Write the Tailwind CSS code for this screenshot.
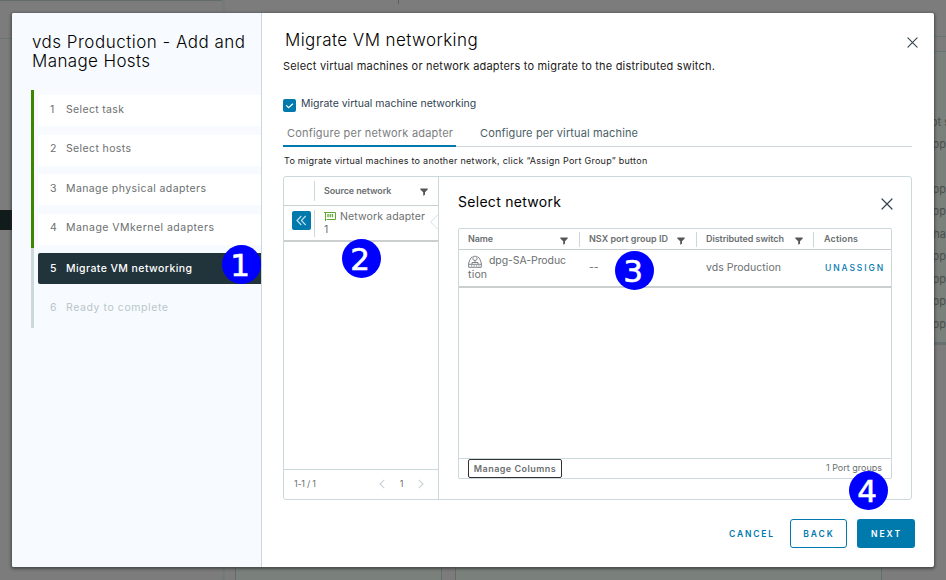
<!DOCTYPE html>
<html lang="en">
<head>
<meta charset="utf-8">
<title>vds Production - Add and Manage Hosts</title>
<script src="https://cdn.jsdelivr.net/npm/@tailwindcss/browser@4"></script>
</head>
<body class="relative w-[946px] h-[580px] overflow-hidden bg-[#7c7c7c] font-['Inter','Liberation_Sans',sans-serif] text-[11px] text-[#6b6f71]">
<svg width="0" height="0" class="absolute">
  <defs>
    <symbol id="filter" viewBox="0 0 8 8"><path d="M.3.5h7.4v1L5 4.2V6.8L3.2 7.7V4.2L.3 1.500z" fill="#565656"/></symbol>
    <symbol id="close" viewBox="0 0 12 12"><path d="M1 1l10 10M11 1L1 11" stroke="#314351" stroke-width="1.2" stroke-linecap="round"/></symbol>
  </defs>
</svg>

<!-- dimmed page behind the dialog -->
<div class="absolute inset-0 text-[11px] text-[#4c4f4e]">
  <div class="absolute left-0 top-0 w-[222px] h-px bg-[#646b6b]"></div>
  <div class="absolute left-[222px] top-0 w-[3px] h-full bg-[#747a79]"></div>
  <div class="absolute left-0 top-[38px] w-[12px] h-px bg-[#697475]"></div>
  <div class="absolute left-[398px] top-0 w-px h-[4px] bg-[#5c6060]"></div>
  <div class="absolute left-0 top-[210px] w-[12px] h-[20px] bg-[#111b1b]"></div>
  <div class="absolute left-[930px] top-[36px] w-[16px] h-[309px] border-t border-[#697475]"></div>
  <div class="absolute left-[930px] top-[51px] w-[16px] h-[294px] bg-[#7a807b] border-t border-b-3 border-t-[#697475] border-b-[#66706f]"></div>
  <div class="absolute left-[235px] top-[560px] w-[207px] h-[20px] bg-[#7a807b] border-x border-[#626c6b]"></div>
  <div class="absolute left-[455px] top-[560px] w-[427px] h-[20px] bg-[#7a807b] border-x border-[#626c6b]"></div>
  <div class="absolute left-[931px] top-[122px] leading-[14px] whitespace-nowrap -translate-y-1/2">ot s</div>
  <div class="absolute right-0 top-[144px] leading-[14px] -translate-y-1/2">upp</div>
  <div class="absolute right-0 top-[189px] leading-[14px] -translate-y-1/2">upp</div>
  <div class="absolute right-0 top-[211px] leading-[14px] -translate-y-1/2">upp</div>
  <div class="absolute right-0 top-[234px] leading-[14px] -translate-y-1/2">nha</div>
  <div class="absolute right-0 top-[256px] leading-[14px] -translate-y-1/2">upp</div>
  <div class="absolute right-0 top-[279px] leading-[14px] -translate-y-1/2">upp</div>
  <div class="absolute right-0 top-[301px] leading-[14px] -translate-y-1/2">upp</div>
  <div class="absolute right-0 top-[324px] leading-[14px] -translate-y-1/2">upp</div>
</div>

<!-- dialog -->
<div class="absolute left-[12px] top-[13px] w-[922px] h-[554px] flex bg-white rounded-[2px] shadow-[0_1px_3px_1px_rgba(40,40,40,0.6)]">
  <aside class="w-[250px] shrink-0 h-full bg-[#f7fbff] border-r border-[#ccd7dc] rounded-l-[2px] pl-[19px] pt-[20px]">
    <h1 class="h-[57px] pl-px text-[17px] leading-[19px] font-light text-black whitespace-nowrap"><span class="tracking-[0.49px]">vds Production - Add and</span><br><span class="tracking-[0.37px]">Manage Hosts</span></h1>
    <nav class="flex">
      <div class="w-[3px] h-[238px] bg-[#ccd9da]"><div class="h-[158px] bg-[#3e8500]"></div></div>
      <ol class="ml-[4px] pt-[5px] flex-1 flex flex-col gap-[8.6px] text-[10.5px]">
        <li class="h-[31px] flex items-center bg-white rounded-l-[2px] pl-[12px] pb-[2px]"><span class="w-[16px]">1</span><span class="tracking-[0.34px]">Select task</span></li>
        <li class="h-[31px] flex items-center bg-white rounded-l-[2px] pl-[12px] pb-[2px]"><span class="w-[16px]">2</span><span class="tracking-[0.38px]">Select hosts</span></li>
        <li class="h-[31px] flex items-center bg-white rounded-l-[2px] pl-[12px] pb-[2px]"><span class="w-[16px]">3</span><span class="tracking-[0.41px]">Manage physical adapters</span></li>
        <li class="h-[31px] flex items-center bg-white rounded-l-[2px] pl-[12px] pb-[2px]"><span class="w-[16px]">4</span><span class="tracking-[0.48px]">Manage VMkernel adapters</span></li>
        <li class="h-[31px] flex items-center bg-[#21333b] rounded-l-[2px] pl-[12px] pb-px font-medium text-white"><span class="w-[16px]">5</span><span class="tracking-[0.42px]">Migrate VM networking</span></li>
        <li class="h-[31px] flex items-center pl-[12px] pb-[2px] text-[#b7c5c9]"><span class="w-[16px]">6</span><span class="tracking-[0.58px]">Ready to complete</span></li>
      </ol>
    </nav>
  </aside>

  <main class="flex-1 flex flex-col pl-[21px] pr-[22px] pt-[15px]">
    <header class="flex justify-between h-[26px]">
      <h2 class="pl-[2px] text-[17px] leading-[24px] font-light tracking-[0.41px] text-black">Migrate VM networking</h2>
      <svg class="size-[11px] mt-[9px] -mr-[6px]"><use href="#close"/></svg>
    </header>
    <p class="h-[45px] pt-[4px] leading-[16px] tracking-[0.2px] text-[#1a1a1a]">Select virtual machines or network adapters to migrate to the distributed switch.</p>
    <label class="flex h-[24px] items-start text-[#314351]">
      <svg class="size-[13px]" viewBox="0 0 13 13"><rect width="13" height="13" rx="2" fill="#0079ad"/><path d="M3.200 6.400l2.400 2.300 4.300-4" fill="none" stroke="#fff" stroke-width="1.2"/></svg>
      <span class="ml-[5px] -mt-[3px] text-[10.5px] leading-[16px]">Migrate virtual machine networking</span>
    </label>
    <div class="h-[24px] flex border-b border-[#ccd7dc] leading-[20px]">
      <div class="w-[173px] h-[24px] pl-[4px] border-b-2 border-[#0079ad] tracking-[0.2px] text-[#7a7e80]">Configure per network adapter</div>
      <div class="pl-[24px] tracking-[0.13px] text-[#4a6066]">Configure per virtual machine</div>
    </div>
    <p class="h-[29px] shrink-0 pt-[6px] pl-px text-[9px] leading-[16px] tracking-[0.27px] text-[#222]">To migrate virtual machines to another network, click “Assign Port Group” button</p>

    <section class="w-[629px] h-[324px] shrink-0 flex border border-[#ccd9dc] rounded-[3px]">
      <div class="w-[155px] flex flex-col border-r border-[#ccd9dc]">
        <div class="h-[29px] flex items-center border-b border-[#c9d1d3] text-[9px] font-semibold">
          <div class="w-[31px] h-[20px] border-r border-[#ccd9dc]"></div>
          <span class="ml-[9px] w-[96px] tracking-[-0.12px]">Source network</span>
          <svg class="size-[8px] mt-px"><use href="#filter"/></svg>
        </div>
        <div class="relative h-[36px] flex items-center border-b-2 border-[#cccfcf]">
          <div class="w-[31px] h-[27px] flex items-start pt-px pl-[8px] border-r border-[#ccd9dc]">
            <svg class="w-[19px] h-[19px]" viewBox="0 0 19 19"><rect width="19" height="19" rx="2" fill="#0079ad"/><path d="M9.300 5L5 9.500 9.300 14M13.700 5L9.400 9.500l4.300 4.500" fill="none" stroke="#c8e2ee" stroke-width="1.1"/></svg>
          </div>
          <div class="pl-[9px] text-[10.5px] leading-[13px] tracking-[0.12px] whitespace-nowrap">
            <svg class="inline-block align-[-1px] mr-[4px] w-[12px] h-[9px]" viewBox="0 0 12 9"><path d="M0 .5h11.500v7H2.500M1.500.5V9" fill="none" stroke="#60a82f"/><path d="M4 2v3.200M6.200 2v3.200M8.400 2v3.200" stroke="#60a82f" stroke-width="1.300"/></svg>Network adapter<br>1
          </div>
          <svg class="absolute right-0 top-[8px] w-[8px] h-[16px]" viewBox="0 0 8 16"><path d="M8 .5L.7 8 8 15.500" fill="none" stroke="#d5dfe2"/></svg>
        </div>
        <div class="flex-1"></div>
        <footer class="h-[30px] flex items-center border-t border-[#ccd9dc] pl-[10px] pb-px text-[9px]">
          <span class="w-[85px] tracking-[-0.24px]">1-1 / 1</span>
          <svg class="w-[6px] h-[10px]" viewBox="0 0 6 10"><path d="M5.200.8L1 5l4.200 4.200" fill="none" stroke="#ccd3d6" stroke-width="1.2"/></svg>
          <span class="w-[33px] text-center">1</span>
          <svg class="w-[6px] h-[10px]" viewBox="0 0 6 10"><path d="M.8.8L5 5 .8 9.200" fill="none" stroke="#ccd3d6" stroke-width="1.2"/></svg>
        </footer>
      </div>

      <div class="flex-1 pl-[19px] pr-[19px] pt-[15px]">
        <div class="h-[36px] flex justify-between">
          <h3 class="text-[14px] leading-[20px] tracking-[0.29px] text-black">Select network</h3>
          <svg class="size-[12px] mt-[6px] -mr-[1px]"><use href="#close"/></svg>
        </div>
        <div class="w-[434px] h-[251px] flex flex-col border border-[#ccd9dc] rounded-[2px]">
          <div class="h-[21px] flex items-center border-b border-[#c9cfd1] text-[9px] font-semibold">
            <div class="w-[121px] h-[15px] flex items-center pl-[9px] border-r border-[#ccd9dc]"><span class="w-[92px] tracking-[-0.1px]">Name</span><svg class="size-[8px] mt-[3px]"><use href="#filter"/></svg></div>
            <div class="w-[117px] h-[15px] flex items-center pl-[9px] border-r border-[#ccd9dc]"><span class="w-[88px] tracking-[0.03px]">NSX port group ID</span><svg class="size-[8px] mt-[3px]"><use href="#filter"/></svg></div>
            <div class="w-[117px] h-[15px] flex items-center pl-[9px] border-r border-[#ccd9dc]"><span class="w-[89px] tracking-[-0.07px]">Distributed switch</span><svg class="size-[8px] mt-[3px]"><use href="#filter"/></svg></div>
            <div class="pl-[10px] tracking-[0.15px]">Actions</div>
          </div>
          <div class="h-[38px] flex items-center border-b-2 border-[#cccfcf] pb-px text-[10.5px]">
            <div class="w-[121px] pl-[9px] leading-[14px] tracking-[-0.08px] whitespace-nowrap">
              <svg class="inline-block align-[-4px] mr-[7px] w-[14px] h-[13px]" viewBox="0 0 14 13" fill="none" stroke="#73777a" stroke-width=".9"><circle cx="7" cy="3.300" r="2.200"/><path d="M4.300 1.500L2.200 4 .7 8v4.300h12.600V8l-1.500-4-2.100-2.500M.7 9.300h12.600M7 5.500v2M4 9V7.500h6V9M3 10.900h1.200M5.500 10.900h1.200M8 10.900h1.200M10.500 10.900h1"/></svg>dpg-SA-Produc<br><span class="tracking-[0.2px]">tion</span>
            </div>
            <div class="w-[117px] pl-[9px]">--</div>
            <div class="w-[117px] pl-[9px] tracking-[0.03px]">vds Production</div>
            <div class="pl-[11px] pt-px text-[8.5px] font-medium tracking-[1.9px] text-[#0079ad]">UNASSIGN</div>
          </div>
          <div class="flex-1"></div>
          <footer class="h-[20px] flex justify-between border-t border-[#ccd9dc] pl-[9px] pr-[9px] text-[9px] leading-[18px]">
            <button class="h-[19px] w-[94px] border border-[#313131] rounded-[2px] font-semibold leading-[17px] tracking-[0.47px] text-center whitespace-nowrap">Manage Columns</button>
            <span>1 Port groups</span>
          </footer>
        </div>
      </div>
    </section>

    <footer class="mt-[19px] -mr-[3px] h-[29px] flex justify-end items-stretch text-[8.5px] font-semibold text-[#0079ad]">
      <button class="mr-[15px] pt-[2px] tracking-[1.85px]">CANCEL</button>
      <button class="w-[57px] mr-[10px] pt-[2px] border border-[#0079ad] rounded-[3px] pl-px tracking-[2px]">BACK</button>
      <button class="w-[58px] pt-[2px] bg-[#0079ad] rounded-[3px] text-white pl-px tracking-[2px]">NEXT</button>
    </footer>
  </main>
</div>

<!-- numbered callouts -->
<div class="absolute left-[222px] top-[245px] size-[39px] rounded-full bg-[#0000ff] text-white text-[31px] leading-[40px] text-center pr-[3px] font-['DejaVu_Sans',sans-serif] [-webkit-text-stroke:0.6px_white]">1</div>
<div class="absolute left-[342px] top-[239px] size-[39px] rounded-full bg-[#0000ff] text-white text-[31px] leading-[40px] text-center pr-[3px] font-['DejaVu_Sans',sans-serif] [-webkit-text-stroke:0.6px_white]">2</div>
<div class="absolute left-[615px] top-[251px] size-[39px] rounded-full bg-[#0000ff] text-white text-[31px] leading-[40px] text-center pr-[3px] font-['DejaVu_Sans',sans-serif] [-webkit-text-stroke:0.6px_white]">3</div>
<div class="absolute left-[849px] top-[471px] size-[39px] rounded-full bg-[#0000ff] text-white text-[31px] leading-[40px] text-center pr-[3px] font-['DejaVu_Sans',sans-serif] [-webkit-text-stroke:0.6px_white]">4</div>
</body>
</html>
